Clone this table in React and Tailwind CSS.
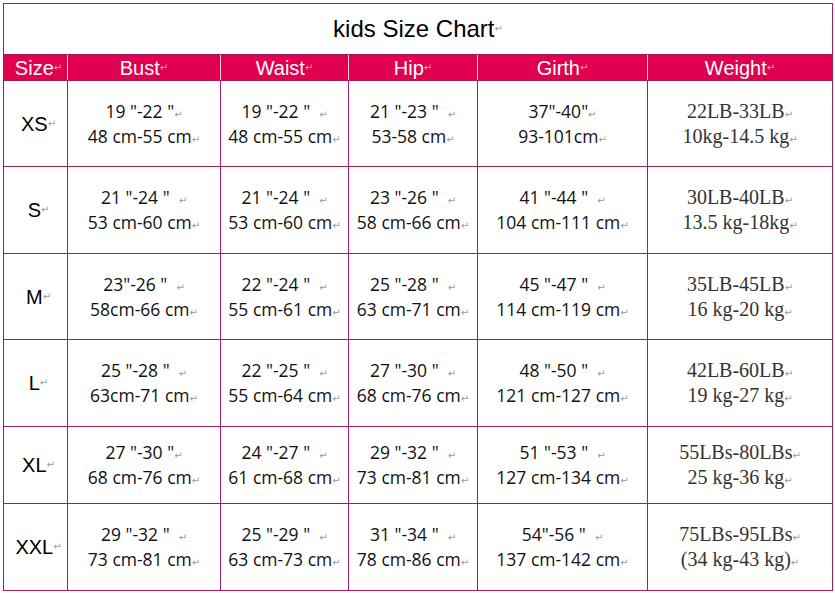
import React from "react";

const rows = [
  {
    size: "XS",
    h: "h-[86px]",
    cells: [
      ['19 "-22 "', "48 cm-55 cm"],
      ['19 "-22 "  ', "48 cm-55 cm"],
      ['21 "-23 "  ', "53-58 cm"],
      ['37"-40"', "93-101cm"],
    ],
    weight: ["22LB-33LB", "10kg-14.5 kg"],
  },
  {
    size: "S",
    h: "h-[87px]",
    cells: [
      ['21 "-24 "  ', "53 cm-60 cm"],
      ['21 "-24 "  ', "53 cm-60 cm"],
      ['23 "-26 "  ', "58 cm-66 cm"],
      ['41 "-44 "  ', "104 cm-111 cm"],
    ],
    weight: ["30LB-40LB", "13.5 kg-18kg"],
  },
  {
    size: "M",
    h: "h-[86px]",
    cells: [
      ['23"-26 "  ', "58cm-66 cm"],
      ['22 "-24 "  ', "55 cm-61 cm"],
      ['25 "-28 "  ', "63 cm-71 cm"],
      ['45 "-47 "  ', "114 cm-119 cm"],
    ],
    weight: ["35LB-45LB", "16 kg-20 kg"],
  },
  {
    size: "L",
    h: "h-[87px]",
    cells: [
      ['25 "-28 "  ', "63cm-71 cm"],
      ['22 "-25 "  ', "55 cm-64 cm"],
      ['27 "-30 "  ', "68 cm-76 cm"],
      ['48 "-50 "  ', "121 cm-127 cm"],
    ],
    weight: ["42LB-60LB", "19 kg-27 kg"],
  },
  {
    size: "XL",
    h: "h-[77px]",
    cells: [
      ['27 "-30 "', "68 cm-76 cm"],
      ['24 "-27 "  ', "61 cm-68 cm"],
      ['29 "-32 "  ', "73 cm-81 cm"],
      ['51 "-53 "  ', "127 cm-134 cm"],
    ],
    weight: ["55LBs-80LBs", "25 kg-36 kg"],
  },
  {
    size: "XXL",
    h: "h-[86px]",
    cells: [
      ['29 "-32 "  ', "73 cm-81 cm"],
      ['25 "-29 "  ', "63 cm-73 cm"],
      ['31 "-34 "  ', "78 cm-86 cm"],
      ['54"-56 "  ', "137 cm-142 cm"],
    ],
    weight: ["75LBs-95LBs", "(34 kg-43 kg)"],
  },
];

const colW = ["w-[153px]", "w-[128px]", "w-[129px]", "w-[170px]"];
const headers = ["Bust", "Waist", "Hip", "Girth"];

const Mark = ({ light }) => (
  <span
    className={`text-[10px] leading-none font-['DejaVu_Sans',sans-serif] ${
      light ? "text-[#f3a0bd]" : "text-[#9a9a9a]"
    }`}
  >
    ↵
  </span>
);

const Line = ({ text }) => (
  <div className="whitespace-pre h-[25px] leading-[25px]">
    {text}
    <Mark />
  </div>
);

export default function App() {
  return (
    <div className="bg-white w-[835px] h-[593px] pt-[3px] pl-[3px]">
      <div className="w-[830px] border border-[#9d1d60] font-['Liberation_Sans',Arial,sans-serif]">
        <div className="h-[51px] border-b border-[#9d1d60] flex items-center justify-center text-[24px] text-black">
          kids Size Chart
          <Mark />
        </div>

        <div className="flex h-[26px] bg-[#e0004f] text-white text-[20px] border-b border-[#9d1d60]">
          <div className="w-[64px] pl-[6px] border-r border-[#fbd3e0] flex items-center justify-center">
            Size
            <Mark light />
          </div>
          {headers.map((h, i) => (
            <div
              key={h}
              className={`${colW[i]} border-r border-[#fbd3e0] flex items-center justify-center`}
            >
              {h}
              <Mark light />
            </div>
          ))}
          <div className="flex-1 flex items-center justify-center">
            Weight
            <Mark light />
          </div>
        </div>

        {rows.map((r, ri) => (
          <div
            key={r.size}
            className={`flex ${r.h} ${ri < rows.length - 1 ? "border-b border-[#9d1d60]" : ""}`}
          >
            <div className="w-[64px] pl-[6px] border-r border-[#9d1d60] flex items-center justify-center text-[20px] text-black">
              {r.size}
              <Mark />
            </div>
            {r.cells.map((c, ci) => (
              <div
                key={ci}
                className={`${colW[ci]} border-r border-[#9d1d60] flex flex-col items-center justify-center text-[17.5px] text-[#111] font-['Open_Sans',sans-serif]`}
              >
                <Line text={c[0]} />
                <Line text={c[1]} />
              </div>
            ))}
            <div className="flex-1 flex flex-col items-center justify-center text-[20px] text-[#333] font-['Liberation_Serif','Times_New_Roman',serif]">
              <Line text={r.weight[0]} />
              <Line text={r.weight[1]} />
            </div>
          </div>
        ))}
      </div>
    </div>
  );
}
